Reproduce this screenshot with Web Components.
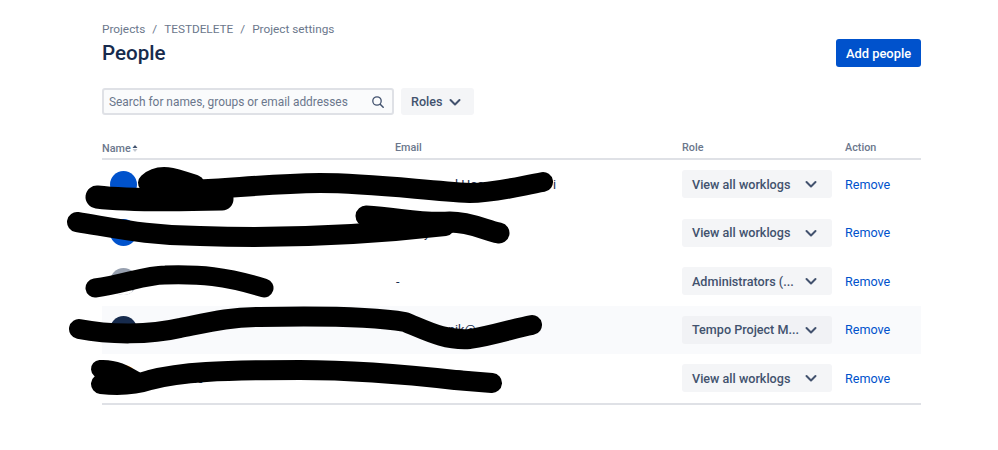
<!DOCTYPE html>
<html lang="en">
<head>
<meta charset="utf-8">
<title>People</title>
<style>
html, body {
  margin: 0;
  background: #fff;
  font-family: Roboto, "Noto Sans", sans-serif;
}
</style>
</head>
<body>
<people-page>
  <person-row avatar="#0052cc" role="View all worklogs" email-text="l Hoa&nbsp;&nbsp;&nbsp;&nbsp;&nbsp;&nbsp;&nbsp;&nbsp;&nbsp;&nbsp;&nbsp;&nbsp;&nbsp;&nbsp;&nbsp;&nbsp;&nbsp;&nbsp;&nbsp;&nbsp;&nbsp;&nbsp;i" email-indent="60"></person-row>
  <person-row avatar="#0052cc" role="View all worklogs" email-text="y" email-indent="29"></person-row>
  <person-row avatar="#97a0af" default-avatar role="Administrators (..." email-text="-" email-indent="1"></person-row>
  <person-row avatar="#172b4d" role="Tempo Project M..." email-text="nik@" email-indent="53" highlighted></person-row>
  <person-row avatar="#ff991f" role="View all worklogs" name-text="ic" name-indent="47"></person-row>
</people-page>

<script>
'use strict';

const chevronIcon = `<svg width="24" height="24" viewBox="0 0 24 24" aria-hidden="true"><path d="M7.5 10l4.5 4.5 4.5-4.5" fill="none" stroke="currentColor" stroke-width="2" stroke-linecap="round" stroke-linejoin="round"/></svg>`;

const selectTemplate = document.createElement('template');
selectTemplate.innerHTML = `
<style>
:host {
  display: inline-flex;
  align-items: center;
  justify-content: space-between;
  box-sizing: border-box;
  height: 28px;
  background: var(--select-bg, #f4f5f7);
  border-radius: 3px;
  color: #42526e;
  font-size: 12.6px;
  font-weight: 500;
  padding: 0 9px 0 10px;
  white-space: nowrap;
}
svg {
  display: block;
  flex: none;
}
</style>
<slot></slot>${chevronIcon}`;

class DropdownButton extends HTMLElement {
  constructor() {
    super();
    const shadow = this.attachShadow({mode: 'open'});
    shadow.appendChild(selectTemplate.content.cloneNode(true));
  }
}
customElements.define('dropdown-button', DropdownButton);

const rowTemplate = document.createElement('template');
rowTemplate.innerHTML = `
<style>
:host {
  display: grid;
  grid-template-columns: 293px 287px 163px 1fr;
  align-items: center;
  height: 48.5px;
  font-size: 12.6px;
  color: #172b4d;
}
:host([highlighted]) {
  background: #f9fafc;
  --select-bg: #f1f2f5;
}
.name {
  display: flex;
  align-items: center;
  padding-left: 8px;
  gap: 10px;
}
.avatar {
  width: 27px;
  height: 27px;
  border-radius: 50%;
  flex: none;
  overflow: hidden;
}
.avatar svg {
  display: block;
}
dropdown-button {
  width: 150px;
}
a {
  color: #0052cc;
  text-decoration: none;
}
</style>
<div class="name"><span class="avatar"></span><span class="name-text"></span></div>
<div class="email"><span class="email-text"></span></div>
<div><dropdown-button></dropdown-button></div>
<div><a href="#">Remove</a></div>`;

class PersonRow extends HTMLElement {
  constructor() {
    super();
    const shadow = this.attachShadow({mode: 'open'});
    shadow.appendChild(rowTemplate.content.cloneNode(true));
  }

  connectedCallback() {
    const shadow = this.shadowRoot;
    const avatar = shadow.querySelector('.avatar');
    avatar.style.background = this.getAttribute('avatar');
    if (this.hasAttribute('default-avatar')) {
      avatar.innerHTML = `<svg width="27" height="27" viewBox="0 0 27 27"><circle cx="13.5" cy="10.5" r="5" fill="#fff"/><path d="M4 27c0-7 4-10 9.5-10S23 20 23 27z" fill="#fff"/></svg>`;
    }
    shadow.querySelector('dropdown-button').textContent = this.getAttribute('role');
    // what the scribbles leave readable of the name and email
    const nameText = shadow.querySelector('.name-text');
    nameText.textContent = this.getAttribute('name-text') || '';
    nameText.style.paddingLeft = (this.getAttribute('name-indent') || 0) + 'px';
    const emailText = shadow.querySelector('.email-text');
    emailText.textContent = this.getAttribute('email-text') || '';
    emailText.style.paddingLeft = (this.getAttribute('email-indent') || 0) + 'px';
  }
}
customElements.define('person-row', PersonRow);

const pageTemplate = document.createElement('template');
pageTemplate.innerHTML = `
<style>
:host {
  display: block;
  position: relative;
  box-sizing: border-box;
  height: 450px;
  padding: 19px 77px 0 102px;
  overflow: hidden;
}
nav {
  display: flex;
  gap: 7px;
  font-size: 11.8px;
  line-height: 20px;
  color: #6b778c;
}
header {
  display: flex;
  justify-content: space-between;
  align-items: center;
  height: 28px;
}
h1 {
  margin: 0;
  font-size: 20.6px;
  font-weight: 500;
  color: #172b4d;
}
.add {
  border: 0;
  height: 28px;
  width: 85px;
  padding: 0;
  border-radius: 3px;
  background: #0052cc;
  color: #fff;
  font: 500 12.9px Roboto, "Noto Sans", sans-serif;
}
.toolbar {
  display: flex;
  gap: 7px;
  margin-top: 21px;
}
.search {
  display: flex;
  align-items: center;
  justify-content: space-between;
  box-sizing: border-box;
  width: 292px;
  height: 27px;
  padding: 0 7px 0 5px;
  border: 2px solid #dfe1e6;
  border-radius: 3px;
  background: #fafbfc;
  color: #6b778c;
  font-size: 11.9px;
  white-space: nowrap;
}
.search svg {
  display: block;
}
.toolbar dropdown-button {
  width: 73px;
  height: 27px;
}
.head {
  display: grid;
  grid-template-columns: 293px 287px 163px 1fr;
  margin-top: 24px;
  height: 19px;
  border-bottom: 2px solid #dfe1e6;
  font-size: 10.8px;
  line-height: 18px;
  font-weight: 500;
  color: #6b778c;
}
.sort {
  display: flex;
  align-items: center;
  gap: 1px;
}
.rows {
  border-bottom: 2px solid #dfe1e6;
}
.scribble {
  position: absolute;
  left: 0;
  top: 0;
  pointer-events: none;
}
</style>
<nav><span>Projects</span><span>/</span><span>TESTDELETE</span><span>/</span><span>Project settings</span></nav>
<header>
  <h1>People</h1>
  <button class="add">Add people</button>
</header>
<div class="toolbar">
  <div class="search">
    <span>Search for names, groups or email addresses</span>
    <svg width="14" height="14" viewBox="0 0 14 14" aria-hidden="true"><circle cx="6" cy="6" r="4.2" fill="none" stroke="#42526e" stroke-width="1.3"/><path d="M9.2 9.2l3 3" stroke="#42526e" stroke-width="1.5" stroke-linecap="round"/></svg>
  </div>
  <dropdown-button>Roles</dropdown-button>
</div>
<div class="head">
  <span class="sort">Name<svg width="6" height="7" viewBox="0 0 6 7" aria-hidden="true"><path d="M3 0l2.5 3h-5z" fill="#42526e"/><path d="M3 7L.5 4h5z" fill="#c1c7d0"/></svg></span>
  <span>Email</span>
  <span>Role</span>
  <span>Action</span>
</div>
<div class="rows"><slot></slot></div>
<svg class="scribble" width="998" height="450" viewBox="0 0 998 450" aria-hidden="true" fill="none" stroke="#000" stroke-linecap="round" stroke-linejoin="round">
  <path stroke-width="23" d="M97 197C130 201 180 200 222 199"/>
  <path stroke-width="20" d="M148 183C160 172 175 178 195 185"/>
  <path stroke-width="20" d="M150 190C210 192 250 184 320 183C370 183 420 190 470 193C495 193 520 186 543 182"/>
  <path stroke-width="20" d="M77 222C115 228 150 236 200 236C260 238 340 238 445 226"/>
  <path stroke-width="21" d="M366 216C400 218 420 224 450 222C470 222 485 230 499 233"/>
  <path stroke-width="19" d="M95 288C125 284 145 275 165 275C200 274 225 276 264 288"/>
  <path stroke-width="20" d="M79 329C110 335 150 335 180 328C210 322 230 317 260 317C310 316 370 316 405 322C425 330 445 341 470 339C495 335 515 328 532 325"/>
  <path stroke-width="18" d="M100 369C115 368 125 374 135 380"/>
  <path stroke-width="20" d="M101 384C120 386 135 385 150 380C180 372 220 370 300 370C360 370 420 376 455 380L492 383"/>
  <path stroke-width="18" d="M455 379L470 381"/>
</svg>`;

class PeoplePage extends HTMLElement {
  constructor() {
    super();
    const shadow = this.attachShadow({mode: 'open'});
    shadow.appendChild(pageTemplate.content.cloneNode(true));
  }
}
customElements.define('people-page', PeoplePage);
</script>
</body>
</html>
